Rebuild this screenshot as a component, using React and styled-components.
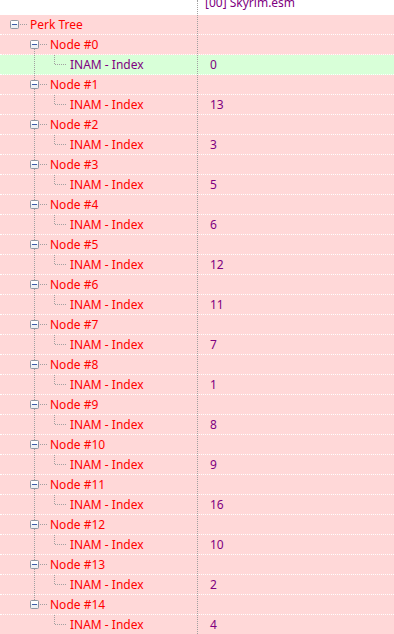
import React from "react";
import styled, { createGlobalStyle } from "styled-components";

const values = [0, 13, 3, 5, 6, 12, 11, 7, 1, 8, 9, 16, 10, 2, 4];

const GlobalStyle = createGlobalStyle`
  html, body {
    margin: 0;
    padding: 0;
    background: #ffffff;
  }
  body {
    font-family: "Noto Sans", "Segoe UI", sans-serif;
    font-size: 12px;
  }
`;

const Tree = styled.div`
  width: 394px;
  height: 634px;
  overflow: hidden;
  display: flex;
  flex-direction: column;
`;

const Header = styled.div`
  display: grid;
  grid-template-columns: 197px 1fr;
  height: 15px;
  box-sizing: border-box;
  border-bottom: 1px dotted #ffffff;
  overflow: hidden;
  background: #ffffff;
  flex-shrink: 0;
`;

const HeaderCell = styled.div`
  display: flex;
  align-items: flex-end;
  height: 14px;
  overflow: hidden;
  padding-left: ${(p) => p.$pad || 0}px;
  border-left: ${(p) => (p.$divider ? "1px dotted #a0a0a0" : "none")};
`;

const HeaderText = styled.span`
  display: block;
  flex-shrink: 0;
  line-height: 22px;
  color: #800080;
  white-space: nowrap;
`;

const Row = styled.div`
  display: grid;
  grid-template-columns: 197px 1fr;
  height: 20px;
  box-sizing: border-box;
  border-bottom: 1px dotted #ffffff;
  background: ${(p) => (p.$focused ? "#d8ffd8" : "#ffd8d8")};
  flex-shrink: 0;
`;

const NameCell = styled.div`
  display: flex;
  align-items: center;
  padding-left: 4px;
  height: 19px;
  overflow: hidden;
`;

const Label = styled.span`
  line-height: 19px;
  color: ${(p) => p.$color};
  padding-left: 2px;
  white-space: nowrap;
`;

const ValueCell = styled.div`
  border-left: 1px dotted #a0a0a0;
  padding-left: 12px;
  line-height: 19px;
  height: 19px;
  color: #800080;
`;

const GuideSvg = styled.svg`
  display: block;
  flex-shrink: 0;
`;

// one indent column of the tree: vertical sibling line, connector and expander
function Guide({ up, down, connector, box, width = 20 }) {
  const dash = "1 1";
  return (
    <GuideSvg width={width} height={19} viewBox={`0 0 ${width} 19`}>
      {up && (
        <line x1="10.5" y1="0" x2="10.5" y2="10" stroke="#a0a0a0" strokeDasharray={dash} />
      )}
      {down && (
        <line x1="10.5" y1="10" x2="10.5" y2="19" stroke="#a0a0a0" strokeDasharray={dash} />
      )}
      {connector && (
        <line
          x1={box ? 16 : 11}
          y1="9.5"
          x2={width - 1}
          y2="9.5"
          stroke="#a0a0a0"
          strokeDasharray={dash}
        />
      )}
      {box && (
        <g>
          <rect x="6.5" y="5.5" width="8" height="8" rx="1" fill="#eef0f4" stroke="#8f96a0" />
          <rect x="7" y="6" width="7" height="3" fill="#ffffff" />
          <line x1="8" y1="9.5" x2="13" y2="9.5" stroke="#3a5ba8" strokeWidth="1" />
        </g>
      )}
    </GuideSvg>
  );
}

export default function App() {
  return (
    <>
      <GlobalStyle />
      <Tree>
        <Header>
          <HeaderCell />
          <HeaderCell $divider $pad={7}>
            <HeaderText>[00] Skyrim.esm</HeaderText>
          </HeaderCell>
        </Header>

        <Row>
          <NameCell>
            <Guide box connector width={24} />
            <Label $color="#ff0000">Perk Tree</Label>
          </NameCell>
          <ValueCell />
        </Row>

        {values.map((v, i) => {
          const first = i === 0;
          const last = i === values.length - 1;
          return (
            <React.Fragment key={i}>
              <Row>
                <NameCell>
                  <Guide />
                  <Guide up={!first} down={!last} box connector width={24} />
                  <Label $color="#ff0000">Node #{i}</Label>
                </NameCell>
                <ValueCell />
              </Row>
              <Row $focused={first}>
                <NameCell>
                  <Guide />
                  <Guide up={!last} down={!last} />
                  <Guide up connector width={24} />
                  <Label $color={first ? "#800080" : "#ff0000"}>INAM - Index</Label>
                </NameCell>
                <ValueCell>{v}</ValueCell>
              </Row>
            </React.Fragment>
          );
        })}
      </Tree>
    </>
  );
}
